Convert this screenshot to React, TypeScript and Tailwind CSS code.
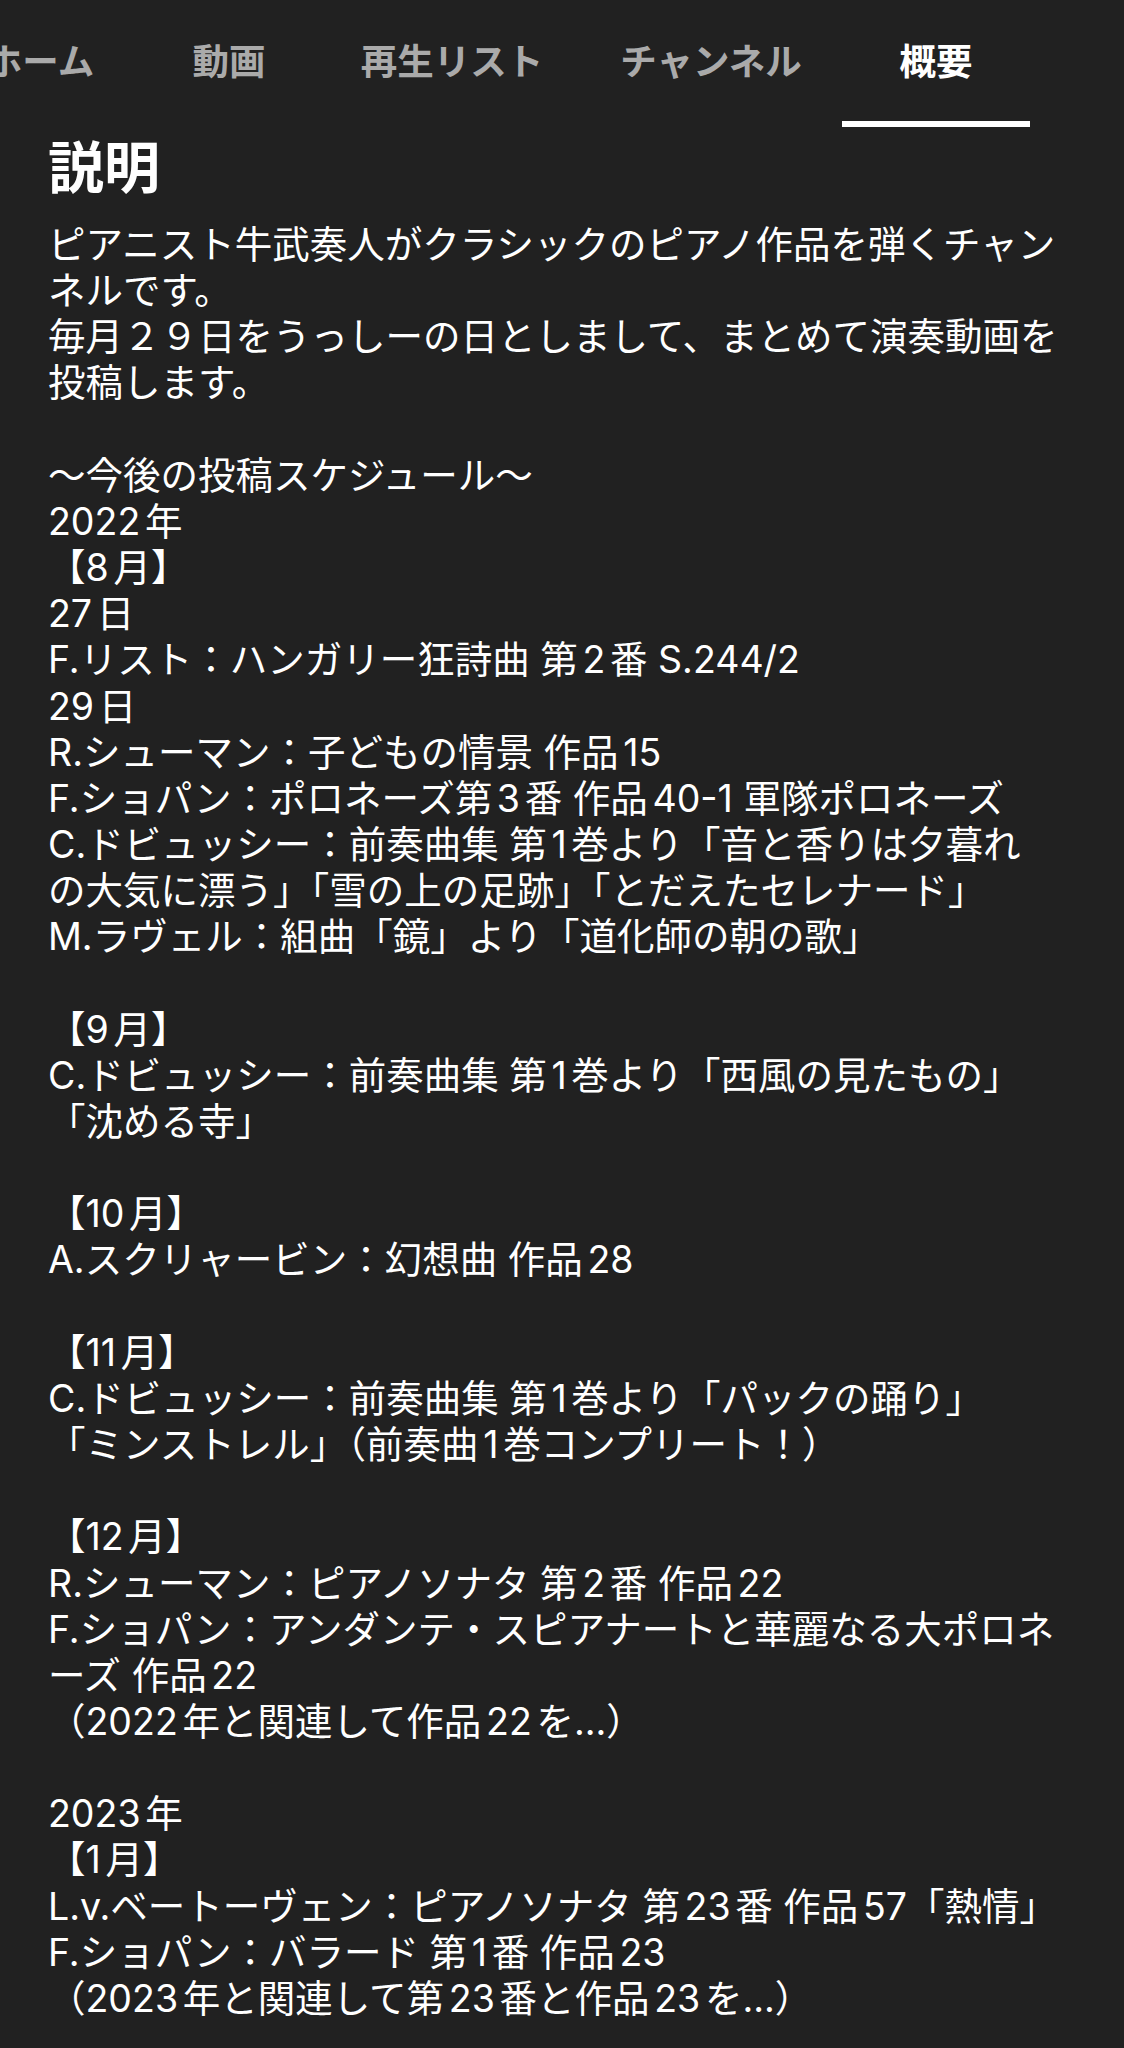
const tabs = [
  { label: "ホーム", width: "w-[188px]" },
  { label: "動画", width: "w-[190px]" },
  { label: "再生リスト", width: "w-[256px]" },
  { label: "チャンネル", width: "w-[262px]" },
  { label: "概要", width: "w-[188px]", active: true },
];

// description as shown in the app, one entry per visual line
const description = [
  "ピアニスト牛武奏人がクラシックのピアノ作品を弾くチャン",
  "ネルです。",
  "毎月２９日をうっしーの日としまして、まとめて演奏動画を",
  "投稿します。",
  "",
  "〜今後の投稿スケジュール〜",
  "2022年",
  "【8月】",
  "27日",
  "F.リスト：ハンガリー狂詩曲 第2番 S.244/2",
  "29日",
  "R.シューマン：子どもの情景 作品15",
  "F.ショパン：ポロネーズ第3番 作品40-1 軍隊ポロネーズ",
  "C.ドビュッシー：前奏曲集 第1巻より「音と香りは夕暮れ",
  "の大気に漂う」「雪の上の足跡」「とだえたセレナード」",
  "M.ラヴェル：組曲「鏡」より「道化師の朝の歌」",
  "",
  "【9月】",
  "C.ドビュッシー：前奏曲集 第1巻より「西風の見たもの」",
  "「沈める寺」",
  "",
  "【10月】",
  "A.スクリャービン：幻想曲 作品28",
  "",
  "【11月】",
  "C.ドビュッシー：前奏曲集 第1巻より「パックの踊り」",
  "「ミンストレル」（前奏曲1巻コンプリート！）",
  "",
  "【12月】",
  "R.シューマン：ピアノソナタ 第2番 作品22",
  "F.ショパン：アンダンテ・スピアナートと華麗なる大ポロネ",
  "ーズ 作品22",
  "（2022年と関連して作品22を...）",
  "",
  "2023年",
  "【1月】",
  "L.v.ベートーヴェン：ピアノソナタ 第23番 作品57「熱情」",
  "F.ショパン：バラード 第1番 作品23",
  "（2023年と関連して第23番と作品23を...）",
];

export default function App() {
  return (
    <div className="min-h-screen w-[1124px] overflow-hidden bg-[#212121] font-['Inter','Noto_Sans_CJK_JP',sans-serif] text-white [text-autospace:normal]">
      <nav className="-ml-[54px] flex h-[127px]">
        {tabs.map((tab) => (
          <div
            key={tab.label}
            className={`relative flex h-full shrink-0 items-center justify-center pb-[2px] ${tab.width}`}
          >
            <span
              className={`whitespace-nowrap text-[36.5px] font-bold leading-none ${
                tab.active ? "text-white" : "text-[#aaaaaa]"
              }`}
            >
              {tab.label}
            </span>
            {tab.active && (
              <div className="absolute bottom-0 left-0 right-0 h-[6px] bg-white" />
            )}
          </div>
        ))}
      </nav>

      <main className="px-[48px] pb-[40px]">
        <h1 className="mt-[8px] text-[56px] font-bold leading-[67px]">説明</h1>
        <div className="mt-[20px] text-[37.5px] leading-[46.17px]">
          {description.map((line, i) => (
            <div key={i} className="h-[46.17px] whitespace-pre">
              {line}
            </div>
          ))}
        </div>
      </main>
    </div>
  );
}
